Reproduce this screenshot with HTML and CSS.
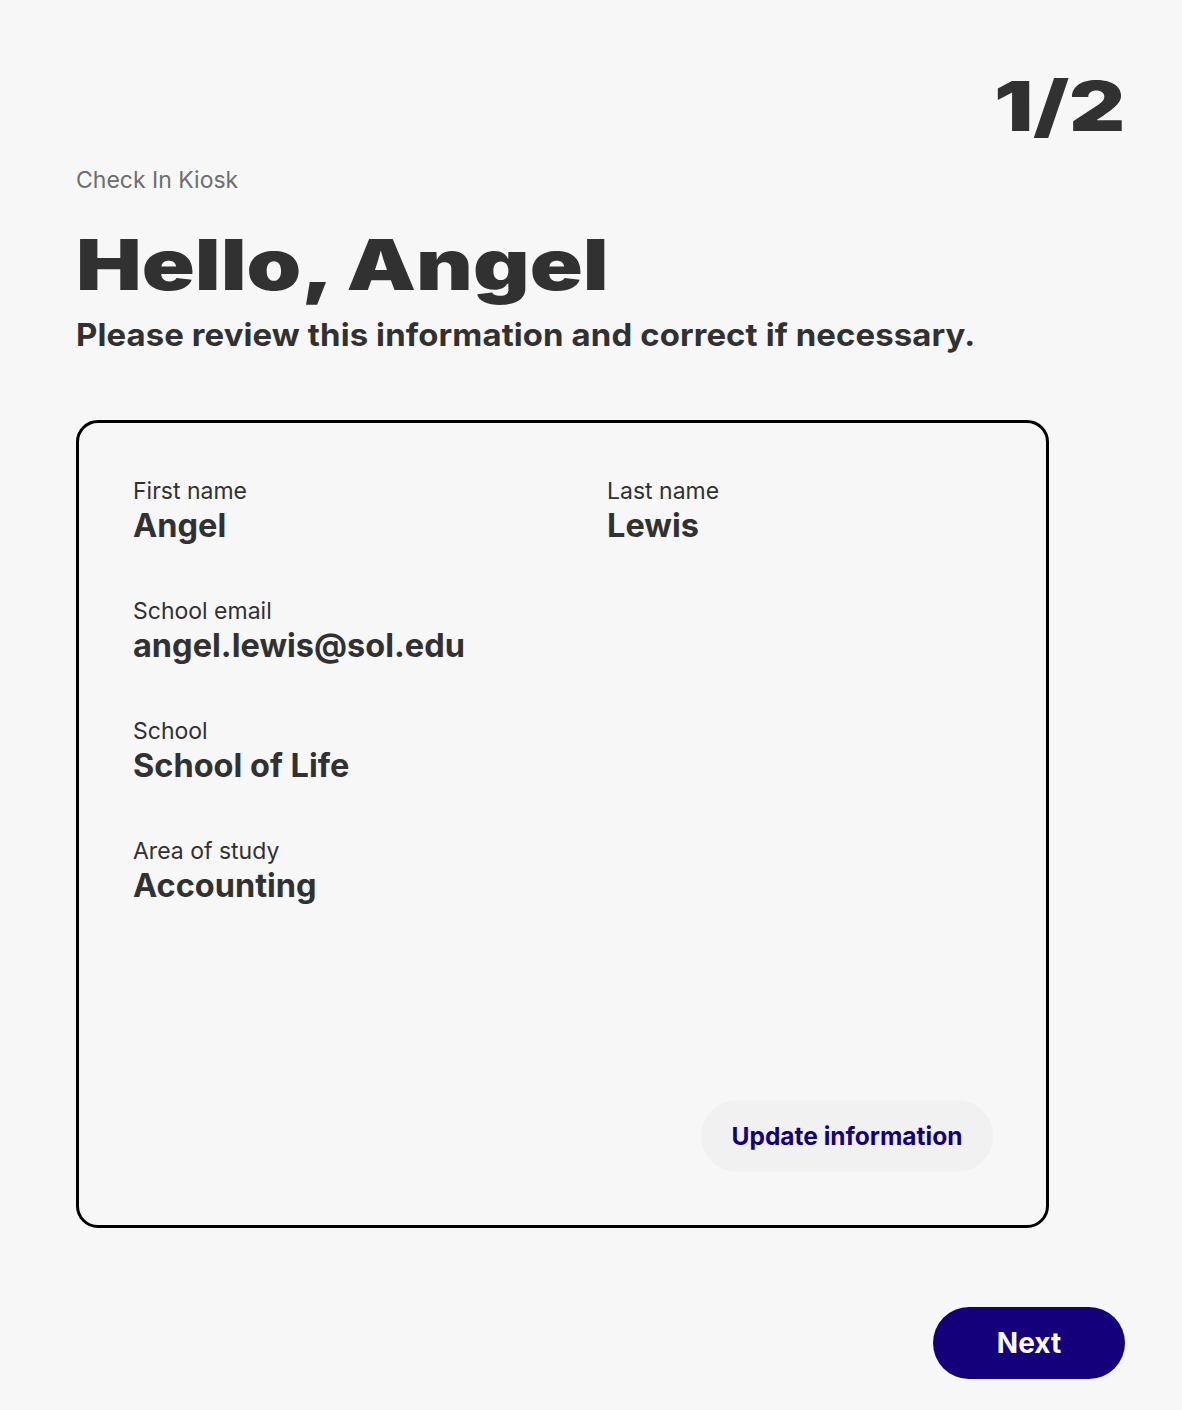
FILE: index.html
```html
<!DOCTYPE html>
<html lang="en">
<head>
<meta charset="utf-8">
<title>Check In Kiosk</title>
<link rel="stylesheet" href="styles.css">
</head>
<body>
<main class="page">
  <div class="step"><span class="wide-text">1/2</span></div>
  <p class="kicker">Check In Kiosk</p>
  <h1 class="title"><span class="wide-text">Hello, Angel</span></h1>
  <p class="subtitle"><span class="wide-text">Please review this information and correct if necessary.</span></p>
  <section class="card">
    <div class="fields">
      <div class="field"><div class="label">First name</div><div class="value">Angel</div></div>
      <div class="field"><div class="label">Last name</div><div class="value">Lewis</div></div>
      <div class="field wide"><div class="label">School email</div><div class="value">angel.lewis@sol.edu</div></div>
      <div class="field wide"><div class="label">School</div><div class="value">School of Life</div></div>
      <div class="field wide"><div class="label">Area of study</div><div class="value">Accounting</div></div>
    </div>
    <div class="card-actions">
      <button class="update">Update information</button>
    </div>
  </section>
  <div class="footer">
    <button class="next">Next</button>
  </div>
</main>
</body>
</html>
```
FILE: styles.css
```css
* { box-sizing: border-box; }
html, body { margin: 0; padding: 0; }
body {
  background: #f7f7f7;
  font-family: Inter, "Noto Sans", sans-serif;
  color: #313131;
  width: 1182px;
  min-height: 1410px;
}
.page {
  padding: 71px 57px 0 76px;
  display: flex;
  flex-direction: column;
}
.wide-text {
  display: inline-block;
  white-space: nowrap;
}
.step {
  align-self: flex-end;
  font-weight: 900;
  font-size: 69px;
  line-height: 70px;
  color: #313131;
}
.step .wide-text {
  transform: scaleX(1.26);
  transform-origin: right center;
}
.kicker {
  margin: 25px 0 0;
  font-size: 23px;
  line-height: 28px;
  color: #6e6e6e;
}
.title {
  margin: 33px 0 0;
  font-weight: 900;
  font-size: 70px;
  line-height: 76px;
  color: #313131;
}
.title .wide-text {
  transform: scaleX(1.251);
  transform-origin: left center;
}
.subtitle {
  margin: 13px 0 0;
  font-weight: 700;
  font-size: 31.5px;
  line-height: 38px;
  color: #313131;
}
.subtitle .wide-text {
  letter-spacing: 0.1px;
  transform: scaleX(1.045);
  transform-origin: left center;
}
.card {
  margin-top: 66px;
  width: 973px;
  height: 808px;
  border: 3px solid #000;
  border-radius: 22px;
  padding: 54px 53px 53px 54px;
  display: flex;
  flex-direction: column;
  justify-content: space-between;
}
.fields {
  display: grid;
  grid-template-columns: 474px 1fr;
  row-gap: 52px;
}
.field.wide { grid-column: 1 / -1; }
.label {
  font-size: 23px;
  line-height: 28px;
  color: #313131;
}
.value {
  font-weight: 700;
  font-size: 32.5px;
  line-height: 38px;
  color: #313131;
  margin-top: 2px;
}
.card-actions {
  display: flex;
  justify-content: flex-end;
}
.update {
  font-family: inherit;
  background: #f1f1f1;
  border: none;
  border-radius: 36px;
  width: 292px;
  height: 72px;
  padding: 0;
  font-weight: 700;
  font-size: 24.5px;
  color: #14007a;
}
.footer {
  display: flex;
  justify-content: flex-end;
  margin-top: 79px;
}
.next {
  font-family: inherit;
  background: #15007c;
  color: #fff;
  border: none;
  border-radius: 36px;
  width: 192px;
  height: 72px;
  font-weight: 700;
  font-size: 28px;
}
```
